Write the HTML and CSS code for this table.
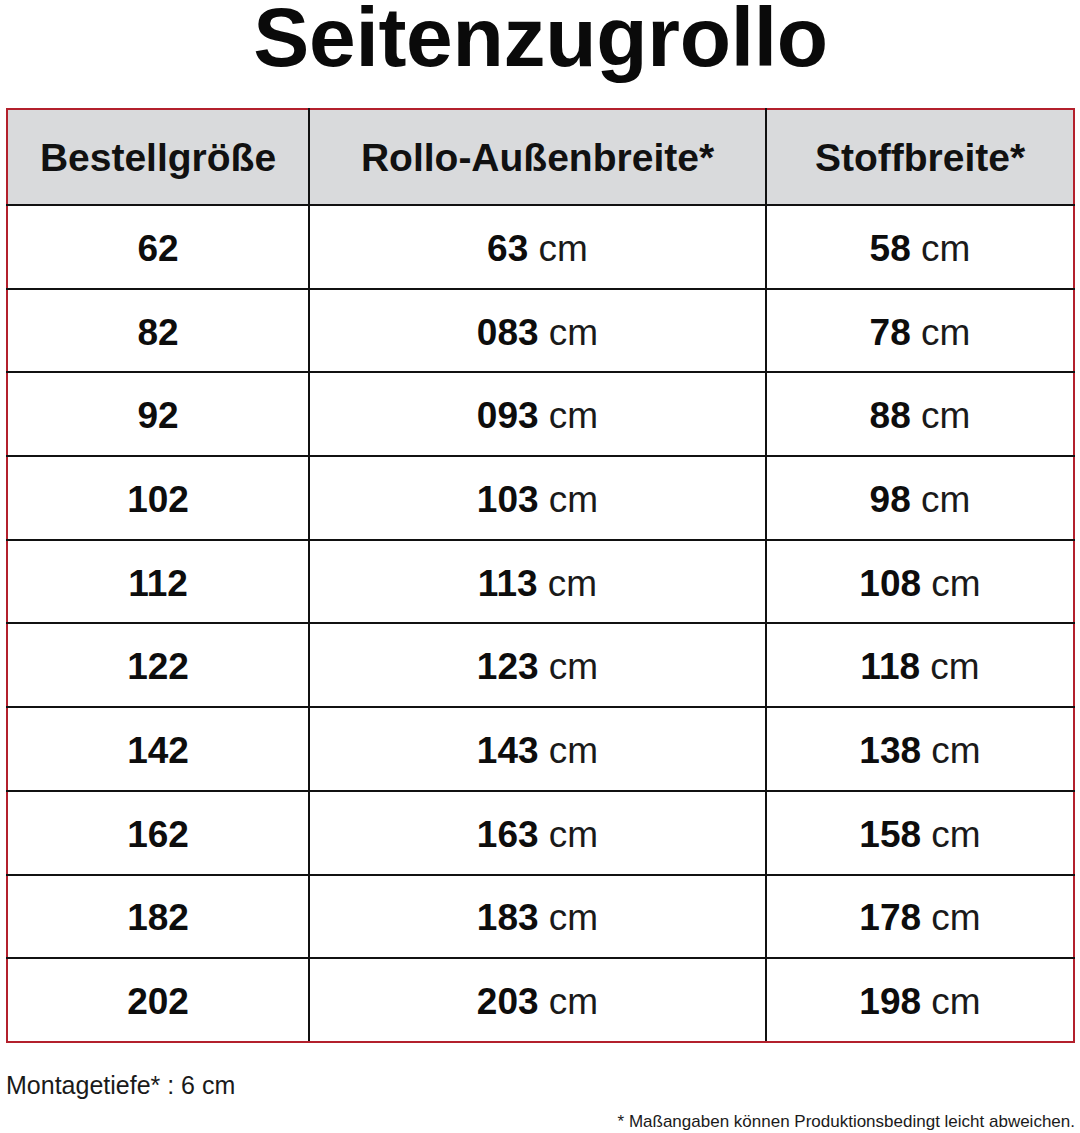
FILE: index.html
```html
<!DOCTYPE html>
<html lang="de">
<head>
<meta charset="utf-8">
<title>Seitenzugrollo</title>
<link rel="stylesheet" href="styles.css">
</head>
<body>
<div class="page">
  <h1 class="title">Seitenzugrollo</h1>
  <table class="sizes">
    <thead>
      <tr>
        <th class="c1">Bestellgröße</th>
        <th class="c2">Rollo-Außenbreite*</th>
        <th class="c3">Stoffbreite*</th>
      </tr>
    </thead>
    <tbody>
      <tr><td><b>62</b></td><td><b>63</b> cm</td><td><b>58</b> cm</td></tr>
      <tr><td><b>82</b></td><td><b>083</b> cm</td><td><b>78</b> cm</td></tr>
      <tr><td><b>92</b></td><td><b>093</b> cm</td><td><b>88</b> cm</td></tr>
      <tr><td><b>102</b></td><td><b>103</b> cm</td><td><b>98</b> cm</td></tr>
      <tr><td><b>112</b></td><td><b>113</b> cm</td><td><b>108</b> cm</td></tr>
      <tr><td><b>122</b></td><td><b>123</b> cm</td><td><b>118</b> cm</td></tr>
      <tr><td><b>142</b></td><td><b>143</b> cm</td><td><b>138</b> cm</td></tr>
      <tr><td><b>162</b></td><td><b>163</b> cm</td><td><b>158</b> cm</td></tr>
      <tr><td><b>182</b></td><td><b>183</b> cm</td><td><b>178</b> cm</td></tr>
      <tr><td><b>202</b></td><td><b>203</b> cm</td><td><b>198</b> cm</td></tr>
    </tbody>
  </table>
  <p class="depth">Montagetiefe* : 6 cm</p>
  <p class="note">* Maßangaben können Produktionsbedingt leicht abweichen.</p>
</div>
</body>
</html>
```
FILE: styles.css
```css
html, body {
  margin: 0;
  padding: 0;
  background: #ffffff;
}
body {
  font-family: "Liberation Sans", Arial, Helvetica, sans-serif;
  color: #111111;
}
.page {
  width: 1080px;
  height: 1133px;
  padding: 0 5px 0 6px;
  box-sizing: border-box;
}
.title {
  margin: 0;
  font-size: 84px;
  line-height: 74px;
  font-weight: 700;
  text-align: center;
  letter-spacing: -0.3px;
  color: #0a0a0a;
}
.sizes {
  margin-top: 34px;
  width: 1069px;
  border-collapse: collapse;
  table-layout: fixed;
  border: 2px solid #b3202c;
}
.sizes th, .sizes td {
  border: 2px solid #111111;
  text-align: center;
  padding: 0;
}
.sizes tr > :first-child { border-left-color: #b3202c; }
.sizes tr > :last-child { border-right-color: #b3202c; }
.sizes thead th { border-top-color: #b3202c; }
.sizes tbody tr:last-child td { border-bottom-color: #b3202c; }
.sizes th {
  height: 93px;
  padding-top: 1px;
  background: #d9dadc;
  font-size: 39px;
  font-weight: 700;
  color: #111111;
}
.c1 { width: 300px; }
.c2 { width: 455px; }
.sizes td {
  height: 77.7px;
  padding-top: 4px;
  font-size: 37px;
  font-weight: 400;
  color: #1a1a1a;
}
.sizes td b {
  font-weight: 700;
  color: #0d0d0d;
}
.depth {
  margin: 28px 0 0 0;
  font-size: 25px;
  line-height: 28px;
  color: #1a1a1a;
}
.note {
  margin: 13px 0 0 0;
  font-size: 17px;
  line-height: 20px;
  text-align: right;
  color: #1a1a1a;
}
```
